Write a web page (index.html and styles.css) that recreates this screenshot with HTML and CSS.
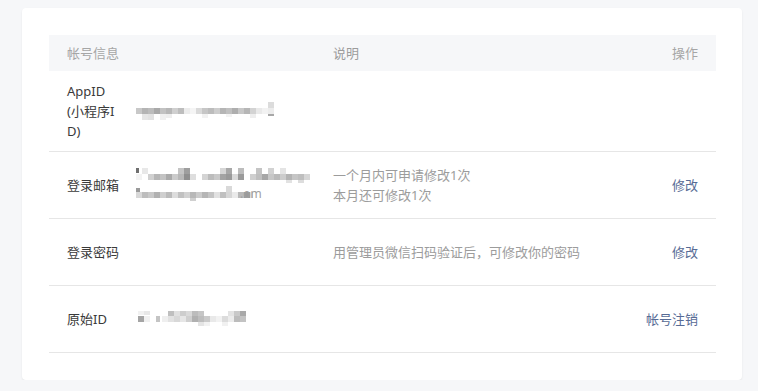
FILE: index.html
```html
<!DOCTYPE html>
<html lang="zh-CN">
<head>
<meta charset="utf-8">
<title>帐号信息</title>
<link rel="stylesheet" href="styles.css">
</head>
<body>
<div class="card">
  <div class="table">
    <div class="row head">
      <div class="cell info">帐号信息</div>
      <div class="cell desc">说明</div>
      <div class="cell op">操作</div>
    </div>

    <div class="row first">
      <div class="cell info">
        <span class="label">AppID(小程序ID)</span>
        <span class="value">
          <svg class="mosaic" width="144" height="18" viewBox="0 0 144 18">
            <rect x="132" y="0" width="6" height="6" fill="#dcdcdc"/>
            <rect x="0" y="6" width="6" height="6" fill="#c8c8c8"/>
            <rect x="6" y="6" width="6" height="6" fill="#b4b4b4"/>
            <rect x="12" y="6" width="6" height="6" fill="#bcbcbc"/>
            <rect x="18" y="6" width="6" height="6" fill="#a9a9a9"/>
            <rect x="24" y="6" width="6" height="6" fill="#c2c2c2"/>
            <rect x="30" y="6" width="6" height="6" fill="#b7b7b7"/>
            <rect x="36" y="6" width="6" height="6" fill="#cfcfcf"/>
            <rect x="42" y="6" width="6" height="6" fill="#bdbdbd"/>
            <rect x="48" y="6" width="6" height="6" fill="#ececec"/>
            <rect x="54" y="6" width="6" height="6" fill="#f5f5f5"/>
            <rect x="60" y="6" width="6" height="6" fill="#dadada"/>
            <rect x="66" y="6" width="6" height="6" fill="#c6c6c6"/>
            <rect x="72" y="6" width="6" height="6" fill="#bcbcbc"/>
            <rect x="78" y="6" width="6" height="6" fill="#cdcdcd"/>
            <rect x="84" y="6" width="6" height="6" fill="#b5b5b5"/>
            <rect x="90" y="6" width="6" height="6" fill="#c0c0c0"/>
            <rect x="96" y="6" width="6" height="6" fill="#aeaeae"/>
            <rect x="102" y="6" width="6" height="6" fill="#c7c7c7"/>
            <rect x="108" y="6" width="6" height="6" fill="#b6b6b6"/>
            <rect x="114" y="6" width="6" height="6" fill="#d3d3d3"/>
            <rect x="120" y="6" width="6" height="6" fill="#e9e9e9"/>
            <rect x="126" y="6" width="6" height="6" fill="#f2f2f2"/>
            <rect x="132" y="6" width="6" height="6" fill="#ececec"/>
            <rect x="6" y="12" width="6" height="6" fill="#e6e6e6"/>
            <rect x="12" y="12" width="6" height="6" fill="#e2e2e2"/>
            <rect x="24" y="12" width="6" height="6" fill="#f0f0f0"/>
            <rect x="30" y="12" width="6" height="4" fill="#eeeeee"/>
            <rect x="66" y="12" width="6" height="4" fill="#f2f2f2"/>
            <rect x="90" y="12" width="6" height="3" fill="#f3f3f3"/>
            <rect x="114" y="12" width="6" height="4" fill="#eeeeee"/>
            <rect x="132" y="12" width="6" height="2" fill="#a8a8a8"/>
          </svg>
        </span>
      </div>
      <div class="cell desc"></div>
      <div class="cell op"></div>
    </div>

    <div class="row">
      <div class="cell info">
        <span class="label">登录邮箱</span>
        <span class="value">
          <svg class="mosaic" width="180" height="34" viewBox="0 0 180 34">
            <rect x="0" y="0" width="3" height="5" fill="#6f6f6f"/>
            <rect x="6" y="0" width="6" height="6" fill="#e8e8e8"/>
            <rect x="42" y="0" width="6" height="6" fill="#c4c4c4"/>
            <rect x="48" y="0" width="6" height="6" fill="#9e9e9e"/>
            <rect x="84" y="0" width="6" height="6" fill="#d6d6d6"/>
            <rect x="90" y="0" width="6" height="6" fill="#a8a8a8"/>
            <rect x="102" y="0" width="6" height="6" fill="#bcbcbc"/>
            <rect x="120" y="0" width="6" height="6" fill="#c4c4c4"/>
            <rect x="132" y="0" width="6" height="6" fill="#d2d2d2"/>
            <rect x="144" y="0" width="6" height="6" fill="#e4e4e4"/>
            <rect x="0" y="6" width="6" height="6" fill="#f3f3f3"/>
            <rect x="12" y="6" width="6" height="6" fill="#d0d0d0"/>
            <rect x="18" y="6" width="6" height="6" fill="#b6b6b6"/>
            <rect x="24" y="6" width="6" height="6" fill="#c3c3c3"/>
            <rect x="30" y="6" width="6" height="6" fill="#aaaaaa"/>
            <rect x="36" y="6" width="6" height="6" fill="#cbcbcb"/>
            <rect x="42" y="6" width="6" height="6" fill="#b8b8b8"/>
            <rect x="48" y="6" width="6" height="6" fill="#8f8f8f"/>
            <rect x="54" y="6" width="6" height="6" fill="#dedede"/>
            <rect x="66" y="6" width="6" height="6" fill="#d4d4d4"/>
            <rect x="72" y="6" width="6" height="6" fill="#bcbcbc"/>
            <rect x="78" y="6" width="6" height="6" fill="#c9c9c9"/>
            <rect x="84" y="6" width="6" height="6" fill="#a3a3a3"/>
            <rect x="90" y="6" width="6" height="6" fill="#999999"/>
            <rect x="96" y="6" width="6" height="6" fill="#d9d9d9"/>
            <rect x="102" y="6" width="6" height="6" fill="#9a9a9a"/>
            <rect x="114" y="6" width="6" height="6" fill="#cfcfcf"/>
            <rect x="120" y="6" width="6" height="6" fill="#bfbfbf"/>
            <rect x="126" y="6" width="6" height="6" fill="#a6a6a6"/>
            <rect x="132" y="6" width="6" height="6" fill="#c7c7c7"/>
            <rect x="138" y="6" width="6" height="6" fill="#bababa"/>
            <rect x="144" y="6" width="6" height="6" fill="#cccccc"/>
            <rect x="150" y="6" width="6" height="6" fill="#b3b3b3"/>
            <rect x="156" y="6" width="6" height="6" fill="#c5c5c5"/>
            <rect x="162" y="6" width="6" height="6" fill="#bebebe"/>
            <rect x="168" y="6" width="6" height="6" fill="#d6d6d6"/>
            <rect x="150" y="12" width="6" height="3" fill="#e2e2e2"/>
            <rect x="162" y="12" width="6" height="3" fill="#dddddd"/>

            <rect x="0" y="20" width="4" height="4" fill="#9a9a9a"/>
            <rect x="0" y="24" width="6" height="6" fill="#d8d8d8"/>
            <rect x="6" y="24" width="6" height="6" fill="#bdbdbd"/>
            <rect x="12" y="24" width="6" height="6" fill="#c8c8c8"/>
            <rect x="18" y="24" width="6" height="6" fill="#b1b1b1"/>
            <rect x="24" y="24" width="6" height="6" fill="#cfcfcf"/>
            <rect x="30" y="24" width="6" height="6" fill="#bbbbbb"/>
            <rect x="36" y="24" width="6" height="6" fill="#dddddd"/>
            <rect x="42" y="24" width="6" height="6" fill="#c1c1c1"/>
            <rect x="48" y="24" width="6" height="6" fill="#d2d2d2"/>
            <rect x="54" y="24" width="6" height="6" fill="#b8b8b8"/>
            <rect x="60" y="24" width="6" height="6" fill="#cbcbcb"/>
            <rect x="66" y="24" width="6" height="6" fill="#b5b5b5"/>
            <rect x="72" y="24" width="6" height="6" fill="#c4c4c4"/>
            <rect x="78" y="24" width="6" height="6" fill="#e1e1e1"/>
            <rect x="84" y="24" width="6" height="6" fill="#c0c0c0"/>
            <rect x="90" y="24" width="6" height="6" fill="#d6d6d6"/>
            <rect x="96" y="24" width="6" height="6" fill="#eaeaea"/>
            <rect x="102" y="24" width="6" height="6" fill="#b9b9b9"/>
            <rect x="108" y="24" width="6" height="6" fill="#9b9b9b"/>
            <rect x="90" y="18" width="6" height="6" fill="#d9d9d9"/>
            <rect x="114" y="24" width="3" height="6" fill="#dddddd"/>
            <text x="104" y="30" class="mtext">.om</text>
            <rect x="54" y="30" width="6" height="3" fill="#d0d0d0"/>
          </svg>
        </span>
      </div>
      <div class="cell desc">一个月内可申请修改1次<br>本月还可修改1次</div>
      <div class="cell op"><a class="link">修改</a></div>
    </div>

    <div class="row">
      <div class="cell info">
        <span class="label">登录密码</span>
      </div>
      <div class="cell desc">用管理员微信扫码验证后，可修改你的密码</div>
      <div class="cell op"><a class="link">修改</a></div>
    </div>

    <div class="row">
      <div class="cell info">
        <span class="label">原始ID</span>
        <span class="value">
          <svg class="mosaic" width="112" height="16" viewBox="0 0 112 16">
            <rect x="2" y="0" width="6" height="4" fill="#f1f1f1"/>
            <rect x="8" y="0" width="6" height="4" fill="#e7e7e7"/>
            <rect x="32" y="0" width="6" height="5" fill="#bfbfbf"/>
            <rect x="38" y="0" width="6" height="5" fill="#e0e0e0"/>
            <rect x="44" y="0" width="6" height="5" fill="#cdcdcd"/>
            <rect x="50" y="0" width="6" height="5" fill="#d9d9d9"/>
            <rect x="56" y="0" width="6" height="5" fill="#bcbcbc"/>
            <rect x="62" y="0" width="6" height="5" fill="#c6c6c6"/>
            <rect x="92" y="0" width="6" height="5" fill="#e3e3e3"/>
            <rect x="98" y="0" width="6" height="5" fill="#c9c9c9"/>
            <rect x="104" y="0" width="6" height="5" fill="#a9a9a9"/>
            <rect x="2" y="5" width="6" height="6" fill="#a5a5a5"/>
            <rect x="8" y="5" width="6" height="6" fill="#f0f0f0"/>
            <rect x="20" y="5" width="4" height="6" fill="#c4c4c4"/>
            <rect x="26" y="5" width="6" height="6" fill="#efefef"/>
            <rect x="32" y="5" width="6" height="6" fill="#e2e2e2"/>
            <rect x="38" y="5" width="6" height="6" fill="#d8d8d8"/>
            <rect x="44" y="5" width="6" height="6" fill="#e6e6e6"/>
            <rect x="50" y="5" width="6" height="6" fill="#cfcfcf"/>
            <rect x="56" y="5" width="6" height="6" fill="#b0b0b0"/>
            <rect x="62" y="5" width="6" height="6" fill="#bdbdbd"/>
            <rect x="68" y="5" width="6" height="6" fill="#cacaca"/>
            <rect x="74" y="5" width="6" height="6" fill="#e9e9e9"/>
            <rect x="80" y="5" width="6" height="6" fill="#f2f2f2"/>
            <rect x="86" y="5" width="6" height="6" fill="#dcdcdc"/>
            <rect x="92" y="5" width="6" height="6" fill="#ececec"/>
            <rect x="98" y="5" width="6" height="6" fill="#bcbcbc"/>
            <rect x="104" y="5" width="6" height="6" fill="#c3c3c3"/>
            <rect x="62" y="11" width="6" height="4" fill="#e4e4e4"/>
            <rect x="68" y="11" width="6" height="4" fill="#f2f2f2"/>
            <rect x="86" y="11" width="6" height="4" fill="#f1f1f1"/>
          </svg>
        </span>
      </div>
      <div class="cell desc"></div>
      <div class="cell op"><a class="link">帐号注销</a></div>
    </div>
  </div>
</div>
</body>
</html>
```

FILE: styles.css
```css
* {
  box-sizing: border-box;
}

html, body {
  margin: 0;
  padding: 0;
}

body {
  background: #f6f7f9;
  font-family: "Noto Sans", "Noto Sans CJK SC", sans-serif;
  font-size: 13px;
  line-height: 20px;
  color: #353535;
  padding: 8px 16px 0 22px;
}

.card {
  width: 720px;
  background: #ffffff;
  border-radius: 4px;
  box-shadow: 0 1px 2px rgba(0, 0, 0, 0.08);
  padding: 27px 26px 27px 27px;
}

.table {
  width: 667px;
}

.row {
  display: grid;
  grid-template-columns: 266px 1fr auto;
  align-items: center;
  min-height: 67px;
  border-bottom: 1px solid #e6e6e6;
}

.row.first {
  min-height: 81px;
}

.row.head {
  min-height: 36px;
  background: #f6f7f9;
  border-bottom: none;
  color: #a6a6a6;
}

.cell {
  padding: 8px 18px;
}

.row:not(.head) .cell {
  padding-top: 10px;
  padding-bottom: 10px;
}

.cell.info {
  display: flex;
  align-items: center;
  padding-right: 0;
}

.label {
  width: 53px;
  flex: none;
  margin-right: 16px;
  word-break: break-all;
  color: #3a3a3a;
}

.value {
  display: flex;
  align-items: center;
}

.mosaic {
  display: block;
}

.mtext {
  font-family: "Noto Sans", sans-serif;
  font-size: 12px;
  fill: #a0a0a0;
}

.desc {
  color: #9c9c9c;
}

.op {
  text-align: right;
}

.link {
  color: #576b95;
  text-decoration: none;
  cursor: pointer;
}
```
